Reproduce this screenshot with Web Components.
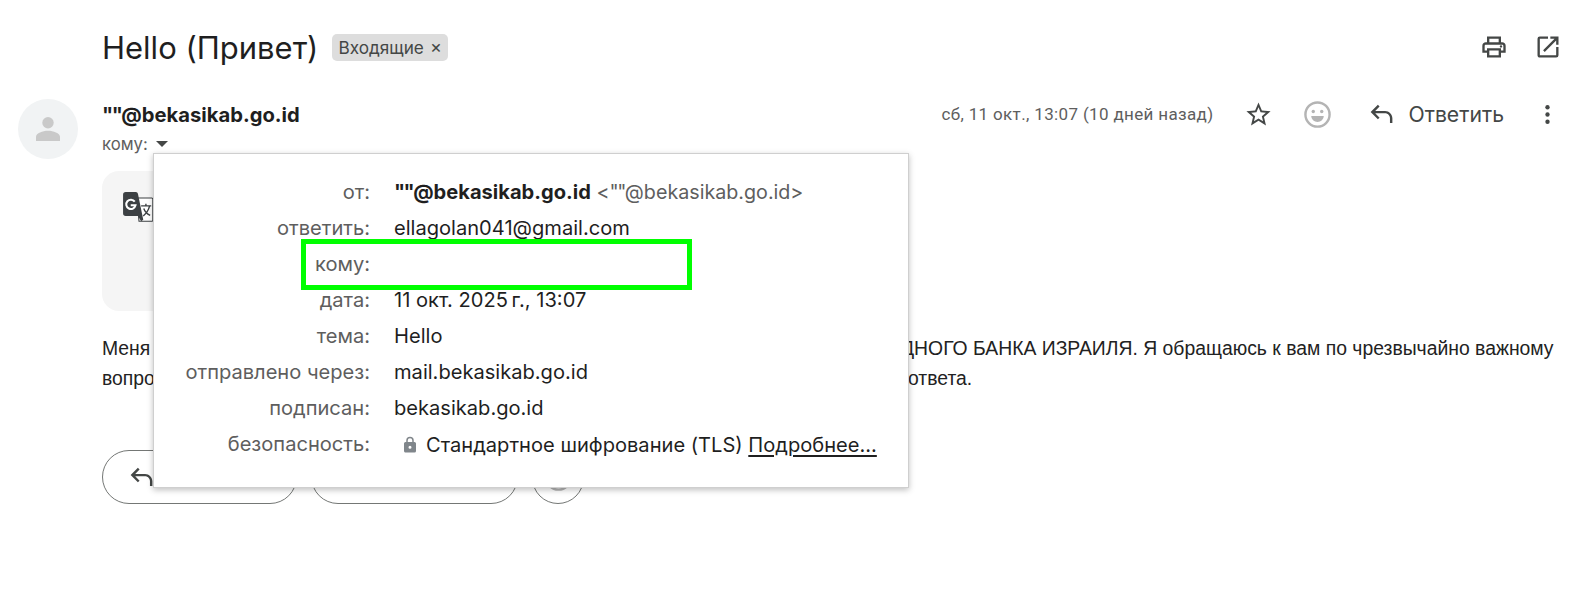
<!DOCTYPE html>
<html lang="ru"><head><meta charset="utf-8"><title>Hello</title>
<style>html,body{margin:0;background:#fff;font-family:Inter,"Liberation Sans",sans-serif;color:#202124;overflow:hidden}</style></head>
<body><mail-view></mail-view>
<script>
const ic={
 print:'<svg width="28" height="28" viewBox="0 0 24 24" fill="#444746"><path d="M19 8h-1V3H6v5H5c-1.7 0-3 1.3-3 3v6h4v4h12v-4h4v-6c0-1.7-1.3-3-3-3zM8 5h8v3H8V5zm8 14H8v-4h8v4zm4-4h-2v-2H6v2H4v-4c0-.6.4-1 1-1h14c.6 0 1 .4 1 1v4z"/><circle cx="18" cy="11.5" r="1"/></svg>',
 open:'<svg width="28" height="28" viewBox="0 0 24 24" fill="#444746"><path d="M19 19H5V5h7V3H5a2 2 0 0 0-2 2v14c0 1.1.9 2 2 2h14a2 2 0 0 0 2-2v-7h-2v7zM14 3v2h3.6l-9.8 9.8 1.4 1.4L19 6.4V10h2V3h-7z"/></svg>',
 star:'<svg width="29" height="29" viewBox="0 0 24 24" fill="#444746"><path d="M22 9.24l-7.19-.62L12 2 9.19 8.63 2 9.24l5.46 4.73L5.82 21 12 17.27 18.18 21l-1.63-7.03L22 9.24zM12 15.4l-3.76 2.27 1-4.28-3.32-2.88 4.38-.38L12 6.1l1.71 4.04 4.38.38-3.32 2.88 1 4.28L12 15.4z"/></svg>',
 smile:'<svg width="29" height="29" viewBox="0 0 24 24"><circle cx="12" cy="12" r="10" fill="none" stroke="#b4b4b4" stroke-width="2"/><circle cx="8.5" cy="9.5" r="1.4" fill="#b4b4b4"/><circle cx="15.5" cy="9.5" r="1.4" fill="#b4b4b4"/><path d="M6.8 13.2h10.4a5.2 5 0 0 1-10.4 0z" fill="#b4b4b4"/></svg>',
 reply:'<svg width="29" height="29" viewBox="0 0 24 24" fill="#444746"><path d="M21 19h-2v-4c0-2.2-1.8-4-4-4H6.8l3.6 3.6L9 16l-6-6 6-6 1.4 1.4L6.8 9H15c3.300 0 6 2.700 6 6v4z"/></svg>',
 forward:'<svg width="29" height="29" viewBox="0 0 24 24" fill="#444746"><path d="M3 19h2v-4c0-2.200 1.800-4 4-4h8.200l-3.600 3.600L15 16l6-6-6-6-1.400 1.400L17.200 9H9c-3.300 0-6 2.700-6 6v4z"/></svg>',
 more:'<svg width="29" height="29" viewBox="0 0 24 24" fill="#444746"><circle cx="12" cy="6" r="1.8"/><circle cx="12" cy="12" r="1.8"/><circle cx="12" cy="18" r="1.8"/></svg>',
 person:'<svg width="36" height="36" viewBox="0 0 24 24" fill="#c9c9c9"><circle cx="12" cy="7.8" r="3.8"/><path d="M12 13.2c-3.5 0-8 1.6-8 4V20h16v-2.8c0-2.4-4.5-4-8-4z"/></svg>',
 lock:'<svg width="18" height="18" viewBox="0 0 24 24" fill="#80868b"><path d="M18 8h-1V6a5 5 0 0 0-10 0v2H6a2 2 0 0 0-2 2v10c0 1.1.9 2 2 2h12a2 2 0 0 0 2-2V10a2 2 0 0 0-2-2zM9 6a3 3 0 0 1 6 0v2H9V6zm3 11a2 2 0 1 1 0-4 2 2 0 0 1 0 4z"/></svg>',
 translate:'<svg width="34" height="34" viewBox="0 0 32 32"><path d="M14 6.500h14a1 1 0 0 1 1 1v20a1 1 0 0 1-1 1H16z" fill="#fff" stroke="#3c4043" stroke-width="1"/><path d="M3.500 1H13a2 2 0 0 1 2 1.500L20 27l-2 1.500L15 23.500H3.500A2.500 2.500 0 0 1 1 21V3.500A2.500 2.500 0 0 1 3.500 1z" fill="#3c4043"/><path d="M12 10a4.400 4.400 0 1 0 .7 3.500H8.200" fill="none" stroke="#fff" stroke-width="1.900"/><path d="M18 14h9.500M22.500 12v2M26 14c-1 4-3 7-6 9.500M20.500 16.500c1 3 3 5 6 6.500" fill="none" stroke="#3c4043" stroke-width="1.300"/></svg>'
};
function def(name,css,html){customElements.define(name,class extends HTMLElement{constructor(){super();this.attachShadow({mode:'open'}).innerHTML='<style>'+css+'</style>'+html;}});}
customElements.define('mail-icon',class extends HTMLElement{connectedCallback(){if(this.shadowRoot)return;this.attachShadow({mode:'open'}).innerHTML='<style>:host{display:inline-flex;align-items:center;justify-content:center;flex:none}svg{display:block}</style>'+ic[this.getAttribute('name')];}});
def('mail-chip',':host{display:inline-flex;align-items:center;height:27px;background:#ddd;border-radius:5px;padding:0 6px;font-size:17.200px;font-weight:400;color:#444746;gap:6px}.x{font-size:18px;line-height:1}','<slot></slot><span class="x">×</span>');
def('mail-subject',':host{display:flex;align-items:center;padding:0 25px 0 102px;height:94px;font-size:31px;color:#1f1f1f}.g{display:flex;align-items:center;gap:14px;flex:1}.a{display:flex;gap:26px;margin-right:-2px}','<div class="g"><slot></slot></div><div class="a"><slot name="actions"></slot></div>');
def('sender-row',':host{display:flex;height:66px;padding-left:18px;position:relative}.av{width:60px;height:60px;border-radius:50%;background:#f1f3f4;display:flex;align-items:center;justify-content:center;margin-top:5px;margin-right:24px}.m{flex:1;display:flex;flex-direction:column}.t{display:flex;align-items:center;height:40px;padding-right:23px}.n{font-weight:700;font-size:20.200px;color:#1f1f1f;flex:1}.q{letter-spacing:-1.500px}.d{font-size:17px;color:#5e5e5e;margin-right:30px;font-family:Roboto,sans-serif;letter-spacing:.35px}.r{display:flex;align-items:center;font-size:21.200px;color:#444746;gap:13px;margin:0 29px 0 14px}.e{margin:0 21px 0 30px;display:flex}.to{font-size:16.700px;color:#5e5e5e;display:flex;align-items:center;gap:8px}.tri{width:0;height:0;border:6px solid transparent;border-top:6px solid #444746;border-bottom:0}',
 '<div class="av"><mail-icon name="person"></mail-icon></div><div class="m"><div class="t"><span class="n"><span class="q">""</span>@bekasikab.go.id</span><span class="d">сб, 11 окт., 13:07 (10 дней назад)</span><mail-icon name="star"></mail-icon><span class="e"><mail-icon name="smile"></mail-icon></span><span class="r"><mail-icon name="reply"></mail-icon>Ответить</span><mail-icon name="more"></mail-icon></div><div class="to">кому: <span class="tri"></span></div></div>');
def('translate-card',':host{display:block;margin:11px 30px 0 102px;height:140px;width:600px;background:#f5f5f5;border-radius:17px;padding:20px 20px;box-sizing:border-box}','<mail-icon name="translate"></mail-icon>');
def('mail-body',':host{display:grid;grid-template-columns:799px 1fr;margin:22px 30px 0 102px;font:19.380px/30px "Liberation Sans",Arial,sans-serif;color:#222;white-space:nowrap}.b{padding-left:7px}','<span>Меня</span><span>ДНОГО БАНКА ИЗРАИЛЯ. Я обращаюсь к вам по чрезвычайно важному</span><span>вопрос</span><span class="b">ответа.</span>');
def('reply-bar',':host{display:flex;gap:14px;margin:57px 0 0 102px}.b{height:54px;box-sizing:border-box;border:1px solid #747775;border-radius:27px;display:flex;align-items:center;padding-left:24px;font-size:20px;color:#444746;gap:9px}.a{width:195px}.c{width:207px}.d{width:52px;padding:0;justify-content:center}','<div class="b a"><mail-icon name="reply"></mail-icon>Ответить</div><div class="b c"><mail-icon name="forward"></mail-icon>Переслать</div><div class="b d"><mail-icon name="smile"></mail-icon></div>');
def('detail-row',':host{display:grid;grid-template-columns:216px 1fr;column-gap:24px;height:36px;align-items:center;font-size:20.100px;color:#1f1f1f;white-space:nowrap}.l{text-align:right;color:#5e5e5e}.v{display:flex;align-items:center;gap:4px}','<span class="l"><slot name="label"></slot></span><span class="v"><slot></slot></span>');
def('detail-popup',':host{position:absolute;left:153px;top:153px;width:756px;height:335px;box-sizing:border-box;border:1px solid #cfcfcf;background:#fff;box-shadow:0 2px 6px rgba(0,0,0,.25);padding:20px 0 0 0;display:block}.hl{position:absolute;left:147px;top:85px;width:391px;height:51px;box-sizing:border-box;border:5px solid #00ff00;pointer-events:none}','<slot></slot><div class="hl"></div>');
def('mail-view',':host{display:block;position:relative;width:1585px;height:597px;overflow:hidden}b{font-weight:700;font-size:20.100px}.g{color:#5e5e5e;font-size:19.700px}.q{letter-spacing:-1.500px}u{text-underline-offset:3px}.sec{display:inline-flex;align-items:center;gap:7px;margin-left:7px;padding-top:1px}',
`<mail-subject>Hello (Привет)<mail-chip>Входящие</mail-chip><mail-icon slot="actions" name="print"></mail-icon><mail-icon slot="actions" name="open"></mail-icon></mail-subject>
<sender-row></sender-row><translate-card></translate-card><mail-body></mail-body><reply-bar></reply-bar>
<detail-popup>
<detail-row><span slot="label">от:</span><span><b><span class="q">""</span>@bekasikab.go.id</b> <span class="g">&lt;<span class="q">""</span>@bekasikab.go.id&gt;</span></span></detail-row>
<detail-row><span slot="label">ответить:</span>ellagolan041@gmail.com</detail-row>
<detail-row><span slot="label">кому:</span></detail-row>
<detail-row><span slot="label">дата:</span>11 окт. 2025&#8239;г., 13:07</detail-row>
<detail-row><span slot="label">тема:</span>Hello</detail-row>
<detail-row><span slot="label">отправлено через:</span>mail.bekasikab.go.id</detail-row>
<detail-row><span slot="label">подписан:</span>bekasikab.go.id</detail-row>
<detail-row><span slot="label">безопасность:</span><span class="sec"><mail-icon name="lock"></mail-icon><span>Стандартное шифрование (TLS) <u>Подробнее...</u></span></span></detail-row>
</detail-popup>`);
</script></body></html>
